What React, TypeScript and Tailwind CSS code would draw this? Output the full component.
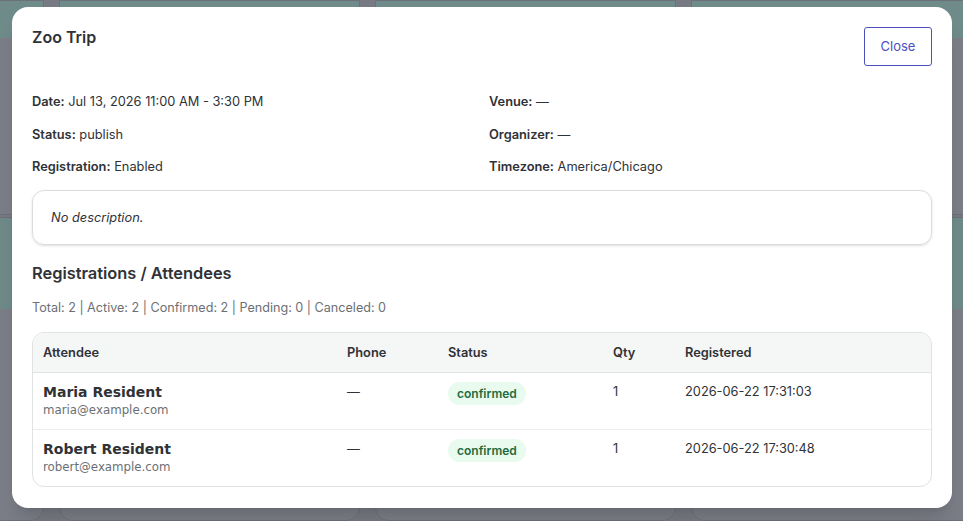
import React from 'react';

interface Registration {
  name: string;
  email: string;
  phone: string;
  status: string;
  qty: number;
  registered: string;
}

const REGISTRATIONS: Registration[] = [
  {
    name: 'Maria Resident',
    email: 'maria@example.com',
    phone: '—',
    status: 'confirmed',
    qty: 1,
    registered: '2026-06-22 17:31:03',
  },
  {
    name: 'Robert Resident',
    email: 'robert@example.com',
    phone: '—',
    status: 'confirmed',
    qty: 1,
    registered: '2026-06-22 17:30:48',
  },
];

const DETAILS: [string, string][] = [
  ['Date:', 'Jul 13, 2026 11:00 AM - 3:30 PM'],
  ['Venue:', '—'],
  ['Status:', 'publish'],
  ['Organizer:', '—'],
  ['Registration:', 'Enabled'],
  ['Timezone:', 'America/Chicago'],
];

function BackdropCard({ tall }: { tall?: boolean }) {
  return (
    <div className="w-[301px] shrink-0 overflow-hidden rounded-b-[14px] border border-[#6c7079]">
      <div className={`bg-[#6e8a89] ${tall ? 'h-[91px]' : 'h-[37px]'}`} />
      <div className={`bg-[#7b7e87] ${tall ? 'h-[211px]' : 'h-[176px]'}`} />
    </div>
  );
}

export default function App() {
  return (
    <div className="relative h-[521px] w-full overflow-hidden bg-[#777a83] font-['Inter',sans-serif]">
      {/* page behind the dimmed overlay */}
      <div className="-ml-[257px] flex flex-col gap-[2px]">
        <div className="flex gap-[15px]">
          <BackdropCard />
          <BackdropCard />
          <BackdropCard />
          <BackdropCard />
        </div>
        <div className="flex gap-[15px]">
          <BackdropCard tall />
          <BackdropCard tall />
          <BackdropCard tall />
          <BackdropCard tall />
        </div>
      </div>

      <div className="absolute left-[12px] top-[7px] w-[940px] rounded-[16px] bg-white px-5 pb-[21px] pt-5 text-[#2f3237] shadow-xl">
        <div className="flex items-start justify-between">
          <h2 className="text-[16px] font-semibold leading-5">Zoo Trip</h2>
          <button
            type="button"
            className="h-[39px] w-[68px] rounded-[3px] border border-[#4b4fc0] text-[13px] text-[#4b4fc0]"
          >
            Close
          </button>
        </div>

        <div className="mt-[26px] grid grid-cols-2 gap-x-[14px] gap-y-[12.5px] text-[12.8px] leading-5">
          {DETAILS.map(([label, value]) => (
            <div key={label}>
              <span className="font-semibold">{label}</span> {value}
            </div>
          ))}
        </div>

        <div className="mt-[13px] flex h-[55px] items-center rounded-[12px] border border-[#dcdcdc] px-[18px] text-[12.8px] italic shadow-sm">
          No description.
        </div>

        <h3 className="mt-[16px] text-[16.4px] font-semibold leading-6">Registrations / Attendees</h3>
        <p className="mt-[13px] text-[12.6px] leading-5 text-[#6b6f74]">
          Total: 2 | Active: 2 | Confirmed: 2 | Pending: 0 | Canceled: 0
        </p>

        <div className="mt-[14px] overflow-hidden rounded-[12px] border border-[#e1e2e3]">
          <table className="w-full table-fixed border-collapse text-left text-[12.8px]">
            <colgroup>
              <col className="w-[304px]" />
              <col className="w-[101px]" />
              <col className="w-[165px]" />
              <col className="w-[72px]" />
              <col />
            </colgroup>
            <thead>
              <tr className="h-[39px] border-b border-[#e1e2e3] bg-[#f5f6f6]">
                {['Attendee', 'Phone', 'Status', 'Qty', 'Registered'].map((h) => (
                  <th key={h} className="px-[11px] pl-[10px] font-semibold">
                    {h}
                  </th>
                ))}
              </tr>
            </thead>
            <tbody>
              {REGISTRATIONS.map((r, i) => (
                <tr
                  key={r.email}
                  className={i < REGISTRATIONS.length - 1 ? 'border-b border-[#ececec]' : ''}
                >
                  <td className="pb-[10px] pl-[10px] pr-[11px] pt-[10px] align-top">
                    <div className="font-['DejaVu_Sans',sans-serif] text-[14px] font-bold leading-[18px]">
                      {r.name}
                    </div>
                    <div className="font-['DejaVu_Sans',sans-serif] text-[11.8px] leading-[18px] text-[#6b6f74]">
                      {r.email}
                    </div>
                  </td>
                  <td className="pl-[10px] pr-[11px] pt-[10px] align-top leading-[18px]">{r.phone}</td>
                  <td className="pl-[10px] pr-[11px] pt-[9px] align-top">
                    <span className="inline-block rounded-full bg-[#e9faee] px-[9px] py-[3px] text-[12px] font-semibold leading-[17px] text-[#1f6b3b]">
                      {r.status}
                    </span>
                  </td>
                  <td className="pl-[10px] pr-[11px] pt-[10px] align-top leading-[18px]">{r.qty}</td>
                  <td className="pl-[10px] pr-[11px] pt-[10px] align-top leading-[18px]">{r.registered}</td>
                </tr>
              ))}
            </tbody>
          </table>
        </div>
      </div>
    </div>
  );
}
